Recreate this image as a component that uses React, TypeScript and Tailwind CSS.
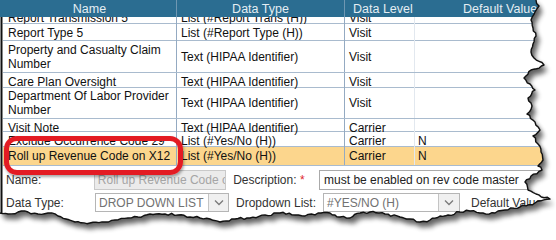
import React from 'react'

type Row = { name: string; type: string; level: string; def: string; h: string; hl?: boolean }

const rows: Row[] = [
  { name: 'Report Type 5', type: 'List (#Report Type (H))', level: 'Visit', def: '', h: 'h-[17px]' },
  { name: 'Property and Casualty Claim Number', type: 'Text (HIPAA Identifier)', level: 'Visit', def: '', h: 'h-[32px]' },
  { name: 'Care Plan Oversight', type: 'Text (HIPAA Identifier)', level: 'Visit', def: '', h: 'h-[15px]' },
  { name: 'Department Of Labor Provider Number', type: 'Text (HIPAA Identifier)', level: 'Visit', def: '', h: 'h-[31px]' },
  { name: 'Visit Note', type: 'Text (HIPAA Identifier)', level: 'Carrier', def: '', h: 'h-[13px]' },
  { name: 'Exclude Occurrence Code 29', type: 'List (#Yes/No (H))', level: 'Carrier', def: 'N', h: 'h-[15px]' },
  { name: 'Roll up Revenue Code on X12', type: 'List (#Yes/No (H))', level: 'Carrier', def: 'N', h: 'h-[19px]', hl: true },
]

// torn edge key points: right side top->bottom, then bottom right->left
const edgePts: [number, number][] = [
  [536, 0], [539, 6], [535, 12], [531, 20], [533, 28], [536, 36], [533, 44], [531, 52], [534, 58], [544, 65],
  [531, 70], [524, 78], [530, 84], [535, 90], [528, 98], [532, 106], [527, 114], [535, 122], [540, 130],
  [533, 136], [538, 144], [541, 152], [543, 160], [538, 166], [542, 170], [531, 176], [525, 182], [528, 190],
  [536, 194], [550, 199], [535, 203], [520, 207], [505, 210], [495, 213], [480, 213], [470, 211], [460, 212],
  [448, 215], [440, 216], [430, 220], [420, 222], [410, 219], [400, 217], [385, 214], [370, 212], [360, 213],
  [350, 218], [340, 217], [330, 213], [318, 213], [305, 216], [295, 215], [280, 213], [265, 215], [250, 218],
  [235, 219], [220, 222], [210, 219], [200, 218], [190, 217], [178, 215], [165, 214], [150, 214], [138, 217],
  [128, 218], [115, 220], [105, 222], [90, 223], [75, 222], [66, 219], [58, 216], [48, 213], [38, 214],
  [28, 212], [18, 212], [8, 214], [0, 213],
]

function jag(pts: [number, number][]) {
  let d = `M${pts[0][0]},${pts[0][1]}`
  let k = 0
  for (let i = 1; i < pts.length; i++) {
    const [x0, y0] = pts[i - 1]
    const [x1, y1] = pts[i]
    const len = Math.hypot(x1 - x0, y1 - y0)
    const n = Math.max(1, Math.round(len / 3))
    const nx = -(y1 - y0) / len
    const ny = (x1 - x0) / len
    for (let j = 1; j <= n; j++) {
      const t = j / n
      k++
      let r = 0
      if (j !== n) {
        const s = Math.sin(k * 12.9898) * 43758.5453
        r = (s - Math.floor(s) - 0.5) * 2.4
      }
      d += ` L${(x0 + (x1 - x0) * t + nx * r).toFixed(1)},${(y0 + (y1 - y0) * t + ny * r).toFixed(1)}`
    }
  }
  return d
}

function TornEdge() {
  const edge = jag(edgePts)
  const paper = edge + ' L0,0 Z'
  const outside = 'M0,0 H556 V240 H0 Z ' + paper
  return (
    <svg className="absolute inset-0 pointer-events-none" width="556" height="240" viewBox="0 0 556 240">
      <defs>
        <clipPath id="outside">
          <path d={outside} clipRule="evenodd" />
        </clipPath>
        <filter id="blur" x="-10%" y="-10%" width="120%" height="130%">
          <feGaussianBlur stdDeviation="2.5" />
        </filter>
      </defs>
      <g clipPath="url(#outside)">
        <rect width="556" height="240" fill="#ffffff" />
        <path d={paper} transform="translate(4,6)" fill="#000" opacity="0.45" filter="url(#blur)" />
        <path d={paper} transform="translate(2,3)" fill="#000" opacity="0.35" filter="url(#blur)" />
      </g>
      <path d={edge} fill="none" stroke="#111" strokeWidth="1.4" strokeLinejoin="round" />
      <path d="M1.5,17 V214" stroke="#111" strokeWidth="2" />
    </svg>
  )
}

function Chevron() {
  return (
    <svg width="10" height="7" viewBox="0 0 10 7">
      <polyline points="1,1.5 5,5.5 9,1.5" fill="none" stroke="#7a7a7a" strokeWidth="1.3" />
    </svg>
  )
}

function TableRow({ r }: { r: Row }) {
  return (
    <div
      className={`grid grid-cols-[174px_168px_70px_1fr] border-b border-[#a9bbce] ${r.h} ${
        r.hl ? 'bg-[#fcd68d]' : 'bg-white'
      }`}
    >
      <div className="flex items-center pl-[5px] pr-[2px] border-r border-[#94aac2] leading-[14px]">{r.name}</div>
      <div className="flex items-center pl-[4px] border-r border-[#94aac2] whitespace-nowrap">{r.type}</div>
      <div className="flex items-center pl-[4px] border-r border-[#e2e8ef]">{r.level}</div>
      <div className="flex items-center pl-[3px]">{r.def}</div>
    </div>
  )
}

export default function App() {
  return (
    <div className="relative w-[556px] h-[240px] overflow-hidden bg-white text-[12px] text-[#111] font-['Liberation_Sans',Arial,sans-serif]">
      {/* header */}
      <div className="grid grid-cols-[177px_168px_70px_1fr] h-[17px] bg-[#2b6d91] text-[#e4edf3] text-[12.5px]">
        <div className="flex items-center justify-center pl-[3px] border-r border-[#6f97b2]">Name</div>
        <div className="flex items-center justify-center border-r border-[#6f97b2]">Data Type</div>
        <div className="flex items-center pl-[8px]">Data Level</div>
        <div className="flex items-center pl-[48px] whitespace-nowrap">Default Value</div>
      </div>

      {/* body */}
      <div className="pl-[3px]">
        <div className="h-[7px] overflow-hidden">
          <div className="-mt-[8px]">
            <TableRow r={{ name: 'Report Transmission 5', type: 'List (#Report Trans (H))', level: 'Visit', def: '', h: 'h-[15px]' }} />
          </div>
        </div>
        {rows.map((r) => (
          <TableRow key={r.name} r={r} />
        ))}
      </div>

      {/* edit form */}
      <div className="pl-[6px] pt-[4px] text-[#333]">
        <div className="flex items-center h-[20px]">
          <div className="w-[89px]">Name:</div>
          <div className="w-[134px] h-[20px] flex items-center pl-[3px] bg-[#ebebeb] border border-[#c9c9c9] text-[#a5a5a5] overflow-hidden whitespace-nowrap">
            Roll up Revenue Code on X12
          </div>
          <div className="w-[94px] pl-[7px]">
            Description: <span className="text-[#e0262c]">*</span>
          </div>
          <div className="w-[240px] h-[20px] flex items-center pl-[4px] bg-white border border-[#aaaaaa] text-[#222] whitespace-nowrap overflow-hidden">
            must be enabled on rev code master
          </div>
        </div>
        <div className="flex items-center h-[19px] mt-[3px]">
          <div className="w-[89px]">Data Type:</div>
          <div className="w-[134px] h-[19px] flex bg-white border border-[#b5b5b5]">
            <div className="flex-1 flex items-center pl-[3px] text-[#727272]">DROP DOWN LIST</div>
            <div className="w-[20px] flex items-center justify-center border-l border-[#c4c4c4] bg-[#f0f0f0]">
              <Chevron />
            </div>
          </div>
          <div className="w-[94px] pl-[7px]">Dropdown List:</div>
          <div className="w-[137px] h-[19px] flex bg-white border border-[#b5b5b5]">
            <div className="flex-1 flex items-center pl-[3px] text-[#727272]">#YES/NO (H)</div>
            <div className="w-[21px] flex items-center justify-center border-l border-[#c4c4c4] bg-[#f0f0f0]">
              <Chevron />
            </div>
          </div>
          <div className="pl-[11px] whitespace-nowrap">Default Value:</div>
        </div>
      </div>

      {/* red annotation */}
      <div className="absolute left-[4px] top-[136px] w-[179px] h-[39px] rounded-[13px] border-[5px] border-[#e31b23] shadow-[1px_2px_3px_rgba(0,0,0,0.35)]" />

      <TornEdge />
    </div>
  )
}
